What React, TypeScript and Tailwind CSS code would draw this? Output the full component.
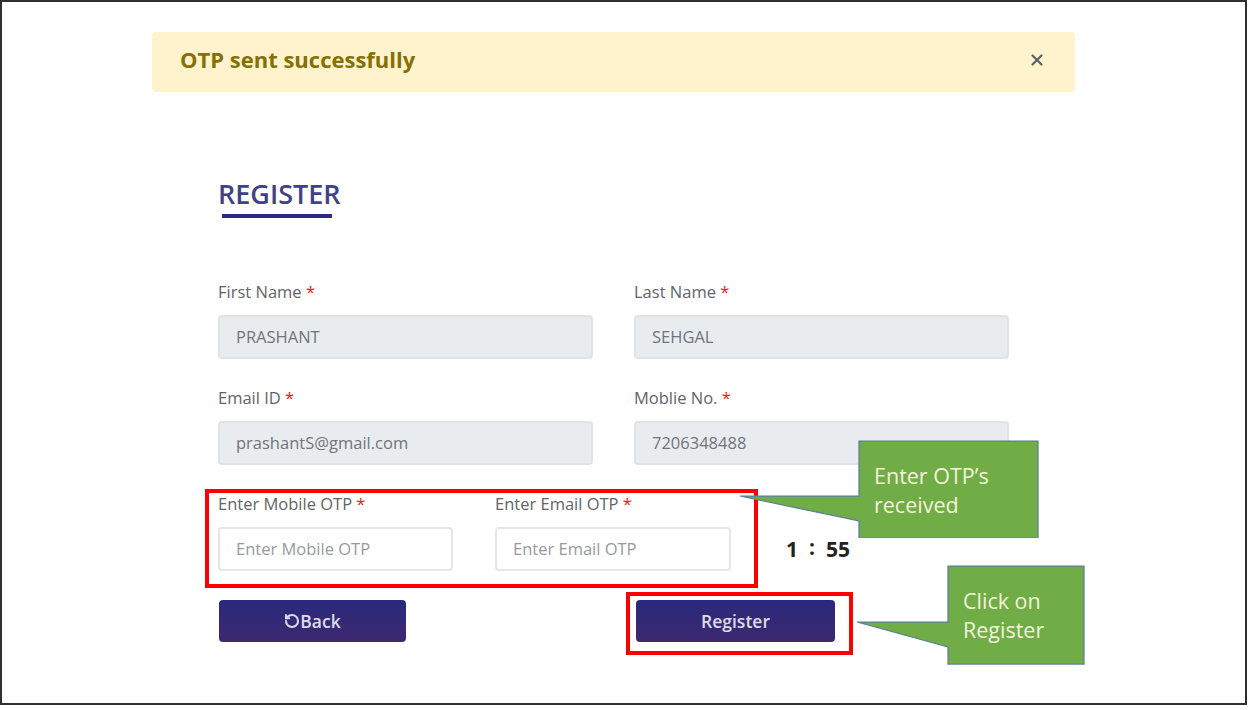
import { RotateCcw, X } from "lucide-react";

function Label({ text }: { text: string }) {
  return (
    <label className="block h-5 -translate-y-px text-[16.5px] leading-5 text-[#5f6468]">
      {text} <span className="text-[#f01818]">*</span>
    </label>
  );
}

function Field({ label, value }: { label: string; value: string }) {
  return (
    <div>
      <Label text={label} />
      <div className="mt-[12px] flex h-[44px] items-center rounded border-2 border-[#e0e3e6] bg-[#e9ecef] px-[16px] text-[16.5px] text-[#70757a]">
        {value}
      </div>
    </div>
  );
}

function OtpField({ label, placeholder, width }: { label: string; placeholder: string; width: string }) {
  return (
    <div className={width}>
      <Label text={label} />
      <div className="mt-[12px] flex h-[44px] items-center rounded border-2 border-[#e3e7ea] bg-white px-[16px] text-[16.5px] text-[#969a9f]">
        {placeholder}
      </div>
    </div>
  );
}

function Callout({
  className,
  points,
  viewBox,
  lines,
  textClass,
}: {
  className: string;
  points: string;
  viewBox: string;
  lines: string[];
  textClass: string;
}) {
  return (
    <div className={`absolute ${className}`}>
      <svg viewBox={viewBox} className="h-full w-full">
        <polygon points={points} fill="#70ad47" stroke="#5b7f9e" strokeWidth="1.25" />
      </svg>
      <div className={`absolute text-[21.5px] leading-[29px] text-[#f5f2dc] ${textClass}`}>
        {lines.map((line) => (
          <div key={line}>{line}</div>
        ))}
      </div>
    </div>
  );
}

export default function App() {
  return (
    <div className="h-[710px] w-[1248px] bg-white font-['Open_Sans',sans-serif]">
      <div className="relative h-[705px] w-[1247px] border-2 border-[#2f2f2f] pl-[150px] pt-[30px]">
        <div className="flex h-[60px] w-[923px] items-center justify-between rounded bg-[#fff3cd] pb-[5px] pl-[28px] pr-[29px]">
          <span className="text-[22px] font-bold text-[#857005]">OTP sent successfully</span>
          <X size={18} strokeWidth={3} className="text-[#5f6368]" />
        </div>

        <div className="pl-[66px]">
          <div className="mt-[85px] inline-block">
            <h1 className="h-[34px] text-[27px] font-semibold leading-[34px] text-[#3f4288]">REGISTER</h1>
            <div className="ml-1 mt-[3px] h-1 w-[110px] bg-[#2c2a7f]" />
          </div>

          <div className="mt-[65px] grid w-[791px] grid-cols-[375px_375px] gap-x-[41px] gap-y-[30px]">
            <Field label="First Name" value="PRASHANT" />
            <Field label="Last Name" value="SEHGAL" />
            <Field label="Email ID" value="prashantS@gmail.com" />
            <Field label="Moblie No." value="7206348488" />
          </div>

          <div className="mt-[30px] flex items-end">
            <OtpField label="Enter Mobile OTP" placeholder="Enter Mobile OTP" width="w-[235px]" />
            <div className="w-[42px]" />
            <OtpField label="Enter Email OTP" placeholder="Enter Email OTP" width="w-[236px]" />
            <div className="ml-[55px] flex h-[42px] items-center text-[21px] font-bold text-[#222]">
              1<span className="mx-[11px] -translate-y-[2px]">:</span>55
            </div>
          </div>

          <div className="mt-[29px] flex">
            <button className="ml-px flex h-[42px] w-[187px] items-center justify-center rounded bg-gradient-to-b from-[#29297c] to-[#3e2870] text-[17.5px] font-semibold text-[#dcdce8]">
              <RotateCcw size={16} strokeWidth={3} />
              Back
            </button>
            <button className="ml-[230px] h-[42px] w-[199px] rounded bg-gradient-to-b from-[#29297c] to-[#3e2870] text-[17.5px] font-semibold text-[#dcdce8]">
              Register
            </button>
          </div>
        </div>

        <div className="absolute left-[203px] top-[487px] h-[99px] w-[553px] border-4 border-[#ff0000]" />
        <div className="absolute left-[624px] top-[590px] h-[63px] w-[227px] border-4 border-[#ff0000]" />

        <Callout
          className="left-[737px] top-[438px] h-[98px] w-[300px]"
          viewBox="737 438 300 98"
          points="857,439 1036,439 1036,536 857,536 857,519 738,494 857,494"
          lines={["Enter OTP’s", "received"]}
          textClass="left-[135px] top-[21px]"
        />
        <Callout
          className="left-[854px] top-[563px] h-[100px] w-[230px]"
          viewBox="854 563 230 100"
          points="946,564 1082,564 1082,662 946,662 946,645 855,620 946,620"
          lines={["Click on", "Register"]}
          textClass="left-[107px] top-[21px]"
        />
      </div>
    </div>
  );
}
